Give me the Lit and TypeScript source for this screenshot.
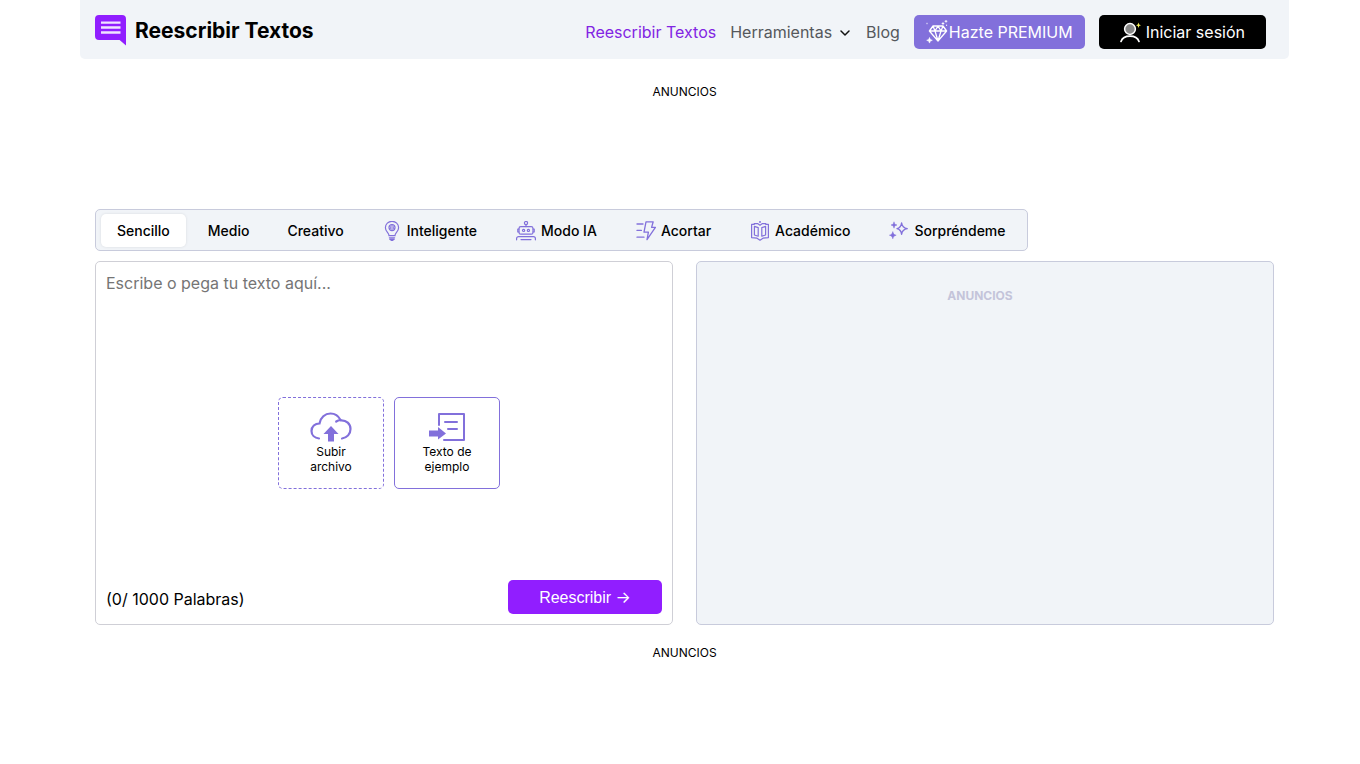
import { LitElement, html, css, svg, nothing } from "lit";
import { customElement, state } from "lit/decorators.js";

const icons: Record<string, unknown> = {
  bulb: svg`<svg viewBox="0 0 20 20" width="20" height="20" fill="none" stroke="currentColor" stroke-width="1.2" stroke-linecap="round">
    <path d="M7 14.6C7 12 3.4 10.600 3.4 6.700a6.600 6.400 0 0 1 13.200 0C16.600 10.600 13 12 13 14.600z"/>
    <circle cx="10" cy="6.600" r="3"/><path d="M10 3.600v6M8.600 5.600v2M11.400 5.600v2" stroke-width=".9"/>
    <path d="M7.400 16.800h5.200M7.800 18.300h4.400M9 19.500h2"/></svg>`,
  robot: svg`<svg viewBox="0 0 20 20" width="20" height="20" fill="none" stroke="currentColor" stroke-width="1.2" stroke-linecap="round" stroke-linejoin="round">
    <circle cx="10" cy="2" r="1.600"/><path d="M10 3.600V5.600M3 8H1.800v3H3M17 8h1.200v3H17"/>
    <rect x="3" y="5.600" width="14" height="7.600" rx="1.800"/><circle cx="7.600" cy="9.400" r="1.100"/><circle cx="12.400" cy="9.400" r="1.100"/>
    <path d="M.6 18.800v-1.200a2 2 0 0 1 2-2h14.800a2 2 0 0 1 2 2v1.200M5 18.600h10"/></svg>`,
  bolt: svg`<svg viewBox="0 0 20 20" width="20" height="20" fill="none" stroke="currentColor" stroke-width="1.3" stroke-linecap="round" stroke-linejoin="round">
    <path d="M10 .8h7.200l-1.600 5.600h3.800L11 18.600l1.400-7.400H8zM1 3h6M1 9.400h4.400M1 16.200h7"/></svg>`,
  book: svg`<svg viewBox="0 0 20 20" width="20" height="20" fill="none" stroke="currentColor" stroke-width="1.2" stroke-linejoin="round">
    <path d="M10 4.200L7.600 2.600H4.200V3.400H1.600v13.200l5.400.6 3 2 3-2 5.400-.6V3.400h-2.600v-.8h-3.400z"/>
    <path d="M8.200 6.600v8.600l-3.800-1.200V5.400zM11.800 6.600v8.600l3.800-1.200V5.400z"/>
    <circle cx="10" cy="1" r=".4"/></svg>`,
  sparkles: svg`<svg viewBox="0 0 20 20" width="20" height="20" fill="currentColor" stroke="currentColor" stroke-linejoin="round">
    <path fill="none" stroke-width="1.400" d="M12.600 2c.5 3.600 1.800 4.900 5.600 5.600-3.800.7-5.100 2-5.600 5.600-.5-3.600-1.600-4.900-4.600-5.600 3-.7 4.100-2 4.600-5.600z"/>
    <path stroke-width=".5" d="M5 .8c.4 2 1 2.800 3 3.200-2 .4-2.600 1.200-3 3.200-.4-2-1-2.800-3-3.200 2-.4 2.600-1.200 3-3.200zM3.800 10.600c.5 2.300 1.200 3.100 3.400 3.600-2.200.5-2.900 1.300-3.400 3.600-.5-2.300-1.200-3.100-3.400-3.600 2.200-.5 2.900-1.300 3.400-3.600z"/></svg>`,
};

const modes = [
  { name: "Sencillo" },
  { name: "Medio" },
  { name: "Creativo" },
  { name: "Inteligente", icon: "bulb" },
  { name: "Modo IA", icon: "robot" },
  { name: "Acortar", icon: "bolt" },
  { name: "Académico", icon: "book" },
  { name: "Sorpréndeme", icon: "sparkles" },
];

@customElement("app-root")
export class AppRoot extends LitElement {
  @state() private mode = "Sencillo";

  static styles = css`
    * { box-sizing: border-box; }
    :host { display: block; font-family: Inter, sans-serif; color: #000; }
    button, textarea { font-family: inherit; color: inherit; margin: 0; }
    button { cursor: pointer; }
    a { text-decoration: none; }
    svg { display: block; flex: none; }
    .page { margin: 0 71px 0 80px; }
    .header {
      display: flex; align-items: center; justify-content: space-between;
      height: 59px; padding: 5px 23px 0 15px;
      background: #f1f4f8; border-radius: 0 0 5px 5px;
    }
    .brand { display: flex; align-items: center; gap: 9px; color: #000; font-size: 21px; font-weight: 700; padding-bottom: 4px; }
    .nav { display: flex; align-items: center; gap: 14px; font-size: 16px; }
    .link { color: #55585c; }
    .current { color: #8224e3; }
    .menu { display: flex; align-items: center; gap: 6px; padding: 0; border: 0; background: none; font-size: 16px; color: #55585c; }
    .cta {
      display: flex; align-items: center; justify-content: center;
      height: 34px; border-radius: 5px; color: #fff; font-size: 16px;
    }
    .premium { padding: 0 12px; background: #8270db; }
    .login { padding: 0 21px; gap: 5px; background: #000; }
    .ad { display: block; text-align: center; font-size: 12px; line-height: 16px; }
    .top { height: 150px; padding-top: 25px; }
    .bottom { padding-top: 20px; }
    .tool { padding: 0 15px; }
    .tabs {
      display: flex; gap: 6px; width: fit-content; height: 42px; padding: 4px 4px 3px 5px;
      border: 1px solid #c8cbdc; border-radius: 5px; background: #f1f4f8;
    }
    .tab {
      display: flex; align-items: center; gap: 5px; height: 33px; padding: 0 16px;
      border: 0; border-radius: 5px; background: none; font-size: 14px; font-weight: 500;
    }
    .pictured { padding-right: 17px; }
    .tab svg { color: #8270db; }
    .selected { background: #fff; box-shadow: 0 0 3px #0000001a; }
    .panels { display: grid; grid-template-columns: 1fr 1fr; gap: 23px; margin-top: 10px; }
    .panel { display: flex; flex-direction: column; min-height: 364px; border: 1px solid #cfcfd6; border-radius: 5px; }
    .results { align-items: center; padding: 26px 10px 0 0; background: #f1f4f8; border-color: #c8cbdc; }
    .muted { color: #c4c4da; font-weight: 700; }
    .input {
      display: block; width: 100%; height: 135px; padding: 9px 10px; border: 0; outline: 0; resize: none;
      background: none; font-size: 16px; line-height: 24px;
    }
    .input::placeholder { color: #757575; opacity: 1; }
    .choices { display: flex; justify-content: center; gap: 10px; padding-left: 10px; }
    .choice {
      display: flex; flex-direction: column; align-items: center; justify-content: center; gap: 2px;
      width: 106px; height: 92px; padding: 0 20px; border: 1px solid #8270db; border-radius: 5px;
      background: #fff; font-size: 12px; line-height: 15px;
    }
    .choice svg { color: #8270db; }
    .upload { border-style: dashed; }
    .foot { display: flex; align-items: center; justify-content: space-between; margin-top: auto; padding: 0 10px 10px; font-size: 16px; }
    .count { padding-top: 4px; }
    .submit {
      width: 154px; height: 34px; border: 0; border-radius: 5px; background: #911eff; color: #fff;
      font-family: "Liberation Sans", sans-serif; font-size: 16px;
    }
    .arrow { font-family: Inter, sans-serif; }
  `;

  render() {
    return html`
      <div class="page">
        <header class="header">
          <a class="brand" href="#">
            <svg width="31" height="31" viewBox="0 0 31 31"><path fill="#911eff" d="M4 0h23a4 4 0 0 1 4 4v26.500L24.600 25H4a4 4 0 0 1-4-4V4a4 4 0 0 1 4-4z"/><path stroke="#f0e4ff" stroke-width="2.400" d="M6 7.600h19.500M6 12.500h19.500M6 17.500h19.500"/></svg>
            <span>Reescribir Textos</span>
          </a>
          <nav class="nav">
            <a class="link current" href="#">Reescribir Textos</a>
            <button class="menu" type="button">Herramientas
              <svg width="14" height="14" viewBox="0 0 14 14" fill="none" stroke="#111" stroke-width="1.500" stroke-linecap="round" stroke-linejoin="round"><path d="M3 6l4 4 4-4"/></svg>
            </button>
            <a class="link" href="#">Blog</a>
            <a class="cta premium" href="#">
              <svg width="23" height="24" viewBox="0 0 23 24" fill="none" stroke="#fff" stroke-width="1.300" stroke-linejoin="round">
                <path d="M7 6h10l3.600 5L12 21 3.400 11zM3.400 11h17.200M7 6l2 5 3 10 3-10 2-5M9 11l3-5 3 5"/>
                <path fill="#fff" stroke-width=".6" d="M3.500 17.500l.8 2 2 .8-2 .8-.8 2-.8-2-2-.8 2-.8z"/>
                <path stroke-width=".9" d="M17 2.200v2.600M15.700 3.500h2.600M20 0v2.600M18.700 1.300h2.600M20.600 4.600v1.400M1 2.800v1.400"/>
              </svg>Hazte PREMIUM</a>
            <a class="cta login" href="#">
              <svg width="21" height="22" viewBox="0 0 21 22" fill="none">
                <circle cx="10" cy="8" r="5.400" fill="#888" stroke="#fff" stroke-width="1.500"/>
                <path d="M1 20.500c1.200-3.600 4.800-5.300 9-5.300s7.800 1.700 9 5.300" stroke="#fff" stroke-width="1.700" stroke-linecap="round"/>
                <path d="M18.500 1.500l.7 2 1.800.7-1.800.7-.7 2-.7-2-1.800-.7 1.800-.7z" fill="#f3ee57"/>
              </svg>Iniciar sesión</a>
          </nav>
        </header>
        <div class="ad top">ANUNCIOS</div>
        <main class="tool">
          <div class="tabs" role="tablist">
            ${modes.map((m) => html`<button type="button" role="tab"
              class="tab ${m.icon ? "pictured" : ""} ${this.mode === m.name ? "selected" : ""}"
              aria-selected=${this.mode === m.name ? "true" : "false"}
              @click=${() => (this.mode = m.name)}>${m.icon ? icons[m.icon] : nothing}<span>${m.name}</span></button>`)}
          </div>
          <div class="panels">
            <section class="panel">
              <textarea class="input" aria-label="Escribe o pega tu texto aquí..." placeholder="Escribe o pega tu texto aquí..."></textarea>
              <div class="choices">
                <button class="choice upload" type="button">
                  <svg width="42" height="30" viewBox="0 0 42 30"><path fill="none" stroke="currentColor" stroke-width="2.200" stroke-linecap="round" d="M9 26.500C4.500 26 1.500 23 1.500 19c0-4.500 3.500-7.500 8-7.500C10.500 5.500 15 1.500 20.500 1.500c4.500 0 8 2.500 10 6.500-1.800.1-3 .6-4.300 1.500M30.500 8.500C36.500 8 40.500 12 40.500 17c0 5-3.500 8.800-8.500 9.500"/><path fill="currentColor" d="M21 14l7.500 8H24v7.500h-6V22h-4.500z"/></svg>
                  <span>Subir archivo</span>
                </button>
                <button class="choice" type="button">
                  <svg width="36" height="30" viewBox="0 0 36 30"><path fill="none" stroke="currentColor" stroke-width="2" stroke-linejoin="round" stroke-linecap="round" d="M10 13V2h25v26H15M16 10h12M19 17h9"/><path fill="currentColor" d="M0 18.500h9V15l8 6.500-8 6V24.500H0z"/></svg>
                  <span>Texto de ejemplo</span>
                </button>
              </div>
              <div class="foot">
                <span class="count">(0/ 1000 Palabras)</span>
                <button class="submit" type="button">Reescribir <span class="arrow">→</span></button>
              </div>
            </section>
            <section class="panel results"><span class="ad muted">ANUNCIOS</span></section>
          </div>
        </main>
        <div class="ad bottom">ANUNCIOS</div>
      </div>
    `;
  }
}
